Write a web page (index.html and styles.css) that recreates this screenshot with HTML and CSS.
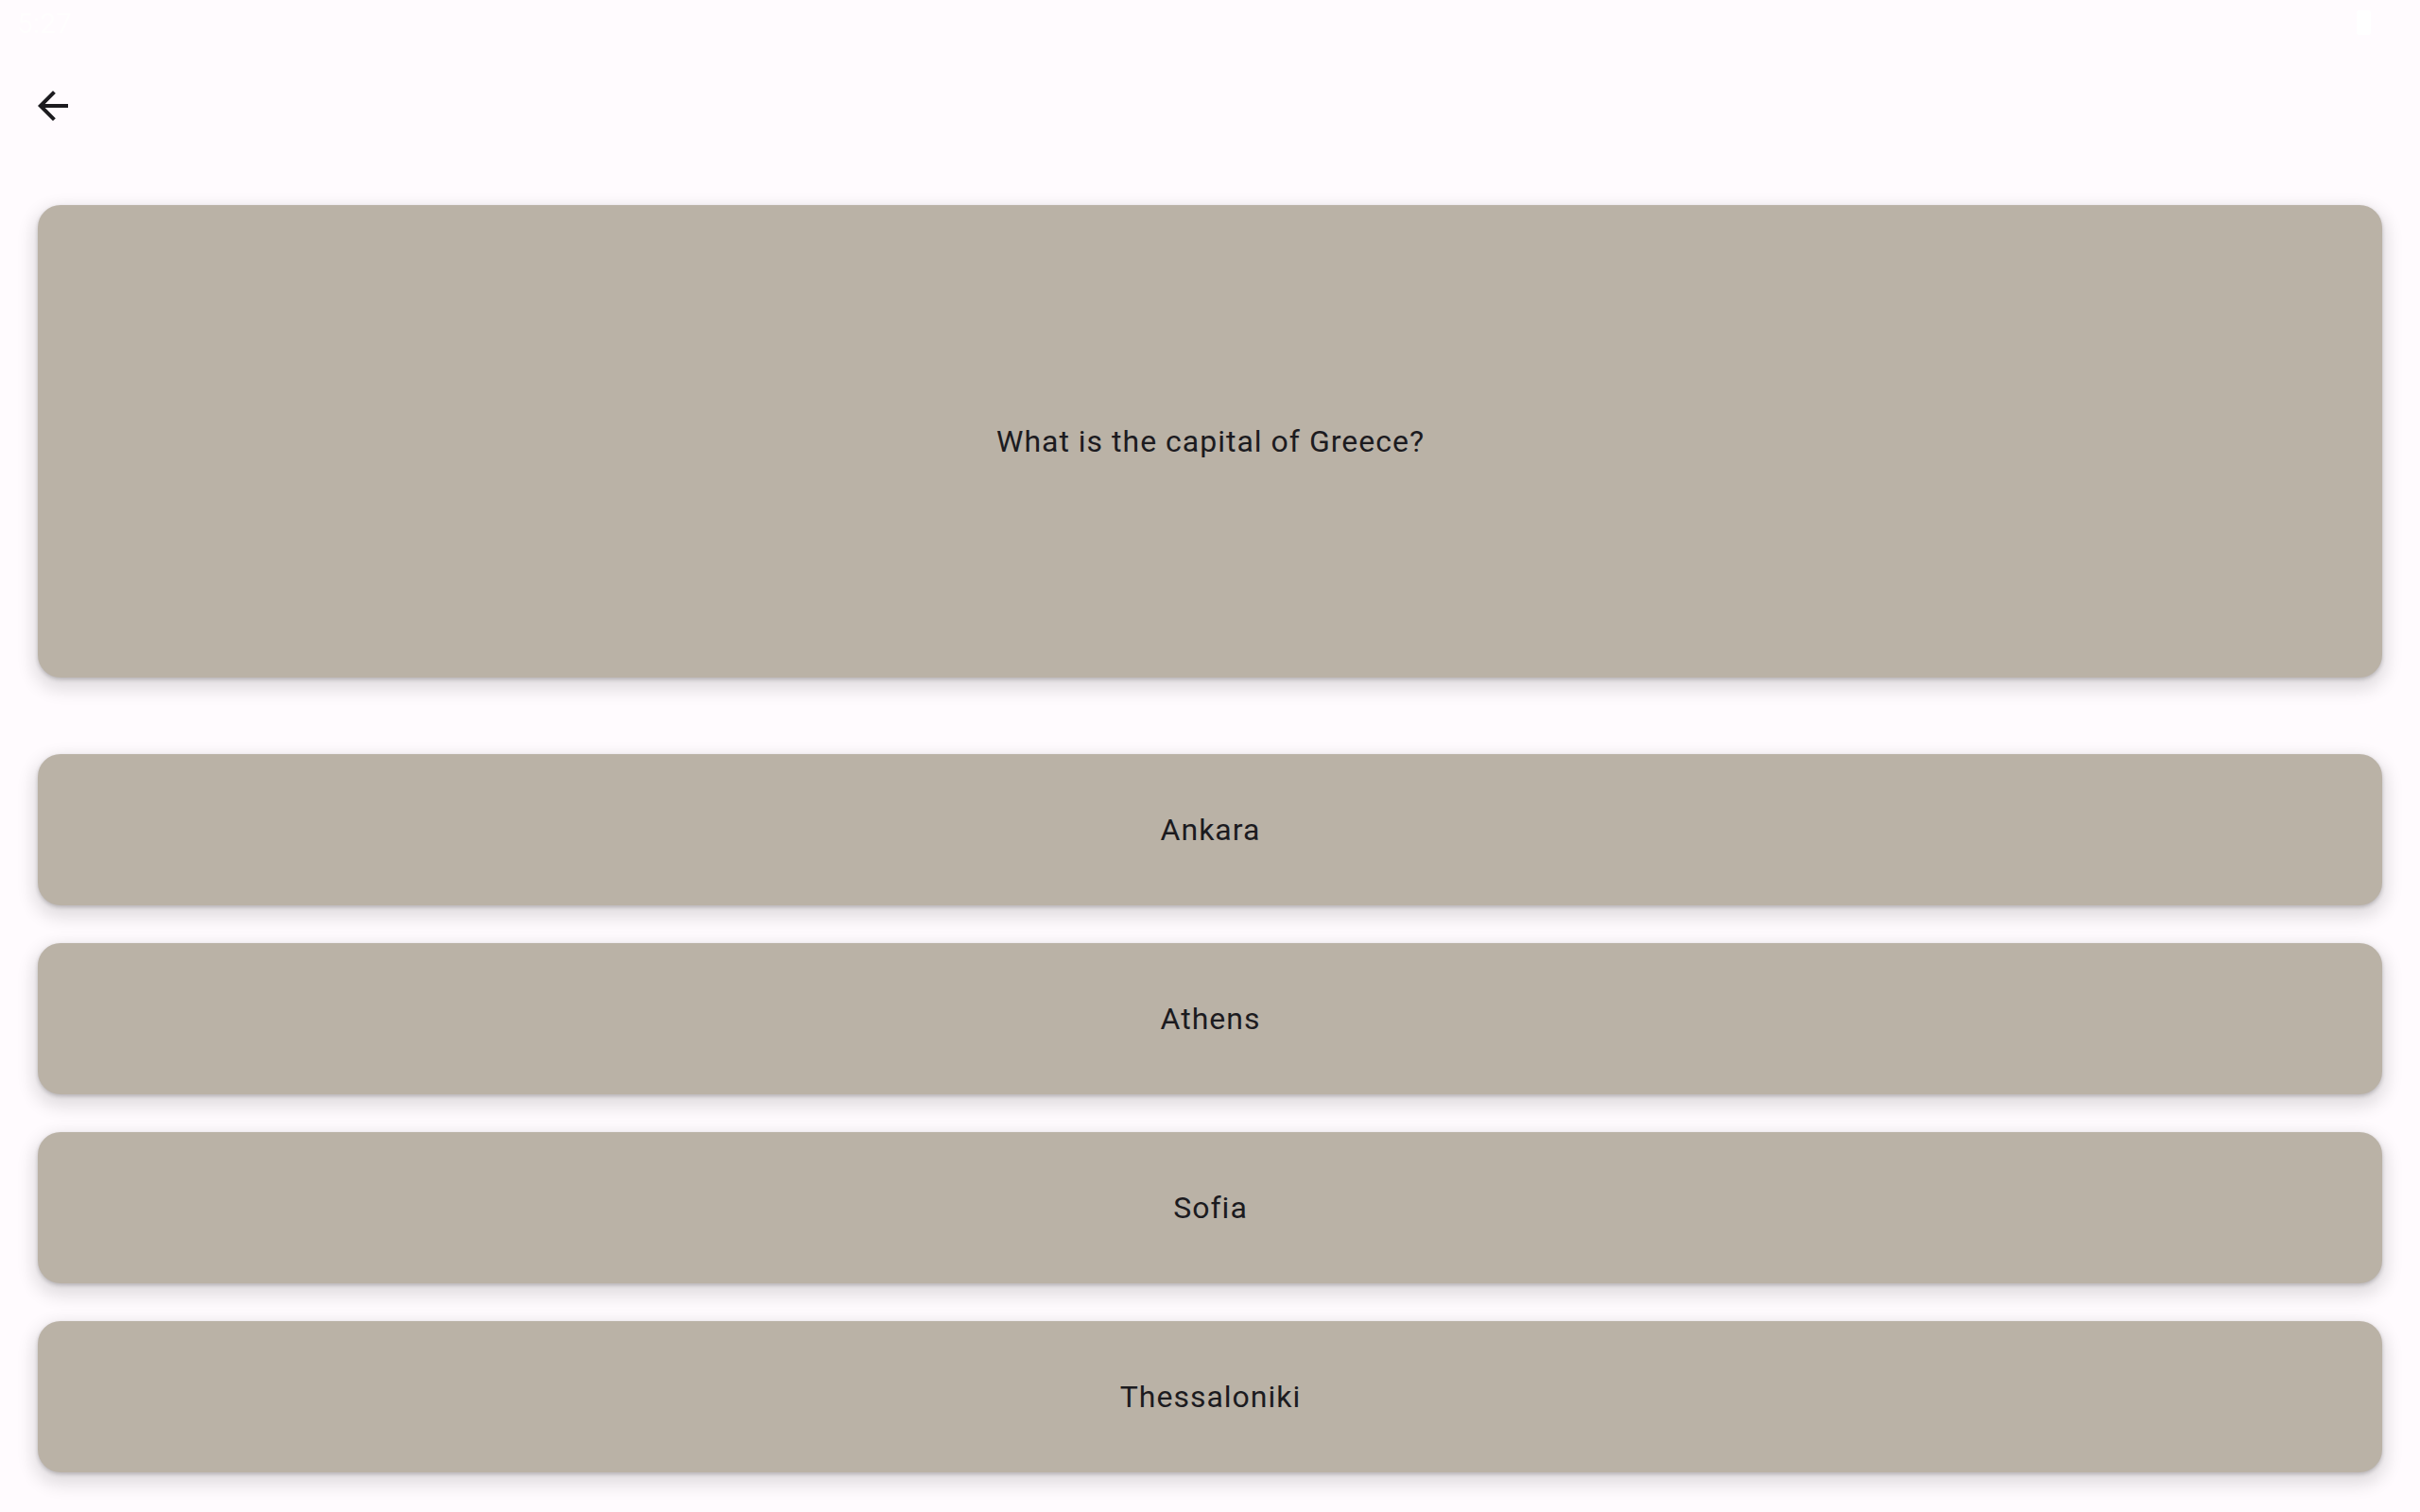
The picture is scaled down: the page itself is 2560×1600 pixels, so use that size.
FILE: index.html
```html
<!DOCTYPE html>
<html>
<head>
<meta charset="utf-8">
<link rel="stylesheet" href="styles.css">
</head>
<body>
<div class="screen">
  <div class="status">
    <span class="time">5:27</span>
    <span class="battery"></span>
  </div>
  <div class="topbar">
    <button class="back" aria-label="Back">
      <svg viewBox="0 0 24 24" width="48" height="48"><path d="M20 11H7.83l5.59-5.59L12 4l-8 8 8 8 1.41-1.41L7.83 13H20v-2z" fill="#1c1b1f"/></svg>
    </button>
  </div>
  <main class="content">
    <div class="card question">What is the capital of Greece?</div>
    <div class="answers">
      <div class="card answer">Ankara</div>
      <div class="card answer">Athens</div>
      <div class="card answer">Sofia</div>
      <div class="card answer">Thessaloniki</div>
    </div>
  </main>
</div>
</body>
</html>
```
FILE: styles.css
```css
html, body {
  margin: 0;
  padding: 0;
  background: #fffbfe;
}
.screen {
  width: 2560px;
  height: 1600px;
  font-family: Roboto, "Noto Sans", sans-serif;
  color: #1c1b1f;
  overflow: hidden;
}
.status {
  height: 48px;
  display: flex;
  align-items: center;
  justify-content: space-between;
  padding: 0 52px 0 18px;
}
.time {
  font-size: 30px;
  color: #ffffff;
  opacity: 0.9;
}
.battery {
  width: 15px;
  height: 26px;
  border-radius: 3px;
  background: #ffffff;
}
.topbar {
  height: 128px;
  display: flex;
  align-items: center;
  padding-left: 32px;
}
.back {
  width: 48px;
  height: 48px;
  padding: 0;
  border: none;
  background: none;
  display: flex;
}
.content {
  padding: 41px 40px 0 40px;
  display: flex;
  flex-direction: column;
  gap: 81px;
}
.answers {
  display: flex;
  flex-direction: column;
  gap: 40px;
}
.card {
  background: #bab2a6;
  border-radius: 24px;
  box-shadow: 0 8px 18px 5px rgba(0,0,0,0.12), 0 2px 4px rgba(0,0,0,0.2);
  display: flex;
  align-items: center;
  justify-content: center;
  font-size: 32px;
  letter-spacing: 1px;
  text-indent: 1px;
}
.question {
  height: 500px;
}
.answer {
  height: 160px;
}
```
